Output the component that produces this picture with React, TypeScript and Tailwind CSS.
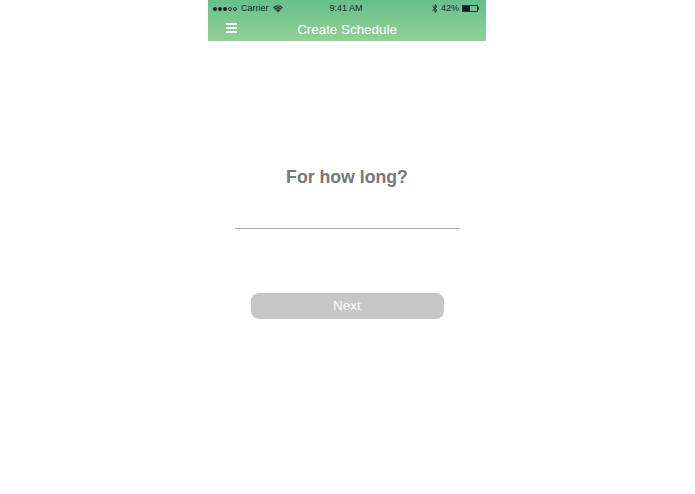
import React from "react";

function Wifi() {
  return (
    <svg width="10" height="8" viewBox="0 0 10 8" className="ml-[4px]">
      <path d="M5 7.6 L0.2 2.6 C3 -0.4 7 -0.4 9.8 2.6 Z" fill="#222" opacity="0.85" />
      <path d="M1.8 3 C3.8 1.4 6.2 1.4 8.2 3" stroke="#6fc48f" strokeWidth="0.7" fill="none" />
      <path d="M3.2 4.6 C4.4 3.7 5.6 3.7 6.8 4.6" stroke="#6fc48f" strokeWidth="0.7" fill="none" />
    </svg>
  );
}

function Bluetooth() {
  return (
    <svg width="6" height="9" viewBox="0 0 6 9">
      <path d="M0.5 2.3 L5 6.4 L3 8.3 V0.7 L5 2.6 L0.5 6.7" stroke="#222" strokeWidth="1" fill="none" />
    </svg>
  );
}

function Battery() {
  return (
    <div className="flex items-center ml-[3px]">
      <div className="w-[16px] h-[7px] border-[0.5px] border-[#333] flex">
        <div className="w-[7px] h-full bg-[#1c1c1c]" />
      </div>
      <div className="w-[1px] h-[3px] bg-[#333]" />
    </div>
  );
}

export default function App() {
  return (
    <div className="w-[695px] h-[494px] bg-white flex justify-center font-['Liberation_Sans',Arial,sans-serif] overflow-hidden">
      <div className="w-[278px] mr-[1px] flex flex-col items-center">
        <header className="w-full h-[41px] bg-gradient-to-b from-[#66bf8c] to-[#90d196] flex flex-col">
          <div className="h-[17px] flex items-center justify-between pl-[5px] pr-[7px] text-[#222] text-[9px]">
            <div className="flex-1 flex items-center">
              <div className="flex items-center gap-[1px]">
                {[0, 1, 2].map((i) => (
                  <span key={i} className="w-[4px] h-[4px] rounded-full bg-[#222]" />
                ))}
                {[0, 1].map((i) => (
                  <span key={i} className="w-[4px] h-[4px] rounded-full border-[0.5px] border-[#333]" />
                ))}
              </div>
              <span className="ml-[4px]">Carrier</span>
              <Wifi />
            </div>
            <span>9:41 AM</span>
            <div className="flex-1 flex items-center justify-end">
              <Bluetooth />
              <span className="ml-[3px]">42%</span>
              <Battery />
            </div>
          </div>
          <div className="flex-1 flex items-center relative">
            <div className="ml-[18px] flex flex-col gap-[2px] mb-[3px]">
              <span className="w-[11px] h-[2px] bg-white" />
              <span className="w-[11px] h-[2px] bg-white" />
              <span className="w-[11px] h-[2px] bg-white" />
            </div>
            <span className="absolute left-0 right-0 text-center text-white text-[13.4px] leading-none pt-[2px]">Create Schedule</span>
          </div>
        </header>
        <h1 className="mt-[125px] text-[17.7px] leading-[22px] font-bold text-[#777777]">For how long?</h1>
        <div className="mt-[40px] w-[225px] h-px bg-[#a9a9a9]" />
        <button className="mt-[64px] w-[193px] h-[26px] rounded-[8px] bg-[#c6c6c6] text-white text-[13.5px]">Next</button>
      </div>
    </div>
  );
}
